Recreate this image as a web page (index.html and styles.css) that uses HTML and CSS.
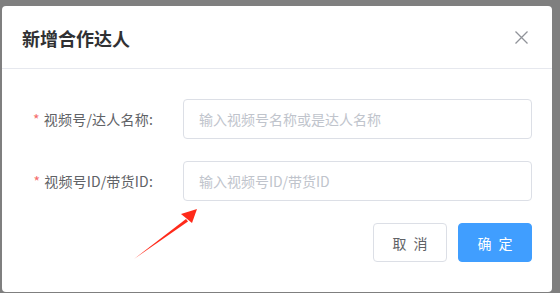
FILE: index.html
```html
<!DOCTYPE html>
<html lang="zh-CN">

<head>
    <meta charset="UTF-8">
    <meta name="viewport" content="width=device-width, initial-scale=1.0">
    <title>新增合作达人</title>
    <link rel="stylesheet" href="styles.css">
</head>

<body>
    <div class="dialog">
        <div class="dialog-header">
            <span class="dialog-title">新增合作达人</span>
            <button class="dialog-close" aria-label="Close">
                <svg width="13" height="13" viewBox="0 0 13 13">
                    <path d="M0.5 0.5 L12.5 12.5 M12.5 0.5 L0.5 12.5" stroke="#909399" stroke-width="1.3" fill="none" />
                </svg>
            </button>
        </div>

        <form class="dialog-body" id="partner-form">
            <div class="form-item">
                <label class="form-label" for="nickname"><span class="req">*</span>视频号/达人名称:</label>
                <input class="form-input" type="text" id="nickname" placeholder="输入视频号名称或是达人名称">
            </div>
            <div class="form-item">
                <label class="form-label" for="shopid"><span class="req">*</span>视频号ID/带货ID:</label>
                <input class="form-input" type="text" id="shopid" placeholder="输入视频号ID/带货ID">
            </div>
        </form>

        <div class="dialog-footer">
            <button class="btn">取 消</button>
            <button class="btn btn-primary">确 定</button>
        </div>
    </div>

    <!-- annotation arrow -->
    <svg class="annotation" width="560" height="293" viewBox="0 0 560 293">
        <polygon points="134,259 186,219 188,221.5" fill="#ff2a1a" />
        <polygon points="197,209 181,214 192,223" fill="#ff2a1a" />
    </svg>
</body>

</html>
```

FILE: styles.css
```css
body {
    margin: 0;
    background-color: #7f7f7f;
    font-family: "Noto Sans CJK SC", "Noto Sans", sans-serif;
    width: 560px;
    height: 293px;
    overflow: hidden;
}

.dialog {
    margin: 6px 0 0 2px;
    width: 550px;
    height: 286px;
    background-color: #fff;
    border-radius: 4px;
}

.dialog-header {
    height: 62px;
    border-bottom: 1px solid #e6e8ee;
    display: flex;
    align-items: center;
    justify-content: space-between;
    padding: 0 24px 0 20px;
}

.dialog-title {
    font-size: 18px;
    font-weight: bold;
    color: #303133;
    padding-top: 2px;
}

.dialog-close {
    border: none;
    background: none;
    padding: 0;
    display: flex;
    margin-top: 1px;
}

.dialog-body {
    padding: 30px 20px 0 0;
}

.form-item {
    display: flex;
    align-items: center;
    margin-bottom: 22px;
}

.form-label {
    flex: none;
    width: 181px;
    padding-right: 30px;
    box-sizing: border-box;
    text-align: right;
    font-size: 14px;
    letter-spacing: 0.2px;
    color: #606266;
}

.req {
    color: #f56c6c;
    margin-right: 4px;
}

.form-input {
    flex: 1;
    min-width: 0;
    height: 40px;
    box-sizing: border-box;
    border: 1px solid #dcdfe6;
    border-radius: 4px;
    padding: 0 15px;
    font-family: inherit;
    font-size: 14px;
    color: #606266;
    outline: none;
}

.form-input::placeholder {
    color: #c0c4cc;
}

.dialog-footer {
    display: flex;
    justify-content: flex-end;
    gap: 11px;
    padding-right: 20px;
}

.btn {
    width: 74px;
    height: 39px;
    border: 1px solid #dcdfe6;
    border-radius: 4px;
    background-color: #fff;
    color: #606266;
    font-family: inherit;
    font-size: 14px;
    letter-spacing: 2px;
    padding: 0 0 0 2px;
}

.btn-primary {
    background-color: #409eff;
    border-color: #409eff;
    color: #fff;
}

.annotation {
    position: absolute;
    left: 0;
    top: 0;
}
```
